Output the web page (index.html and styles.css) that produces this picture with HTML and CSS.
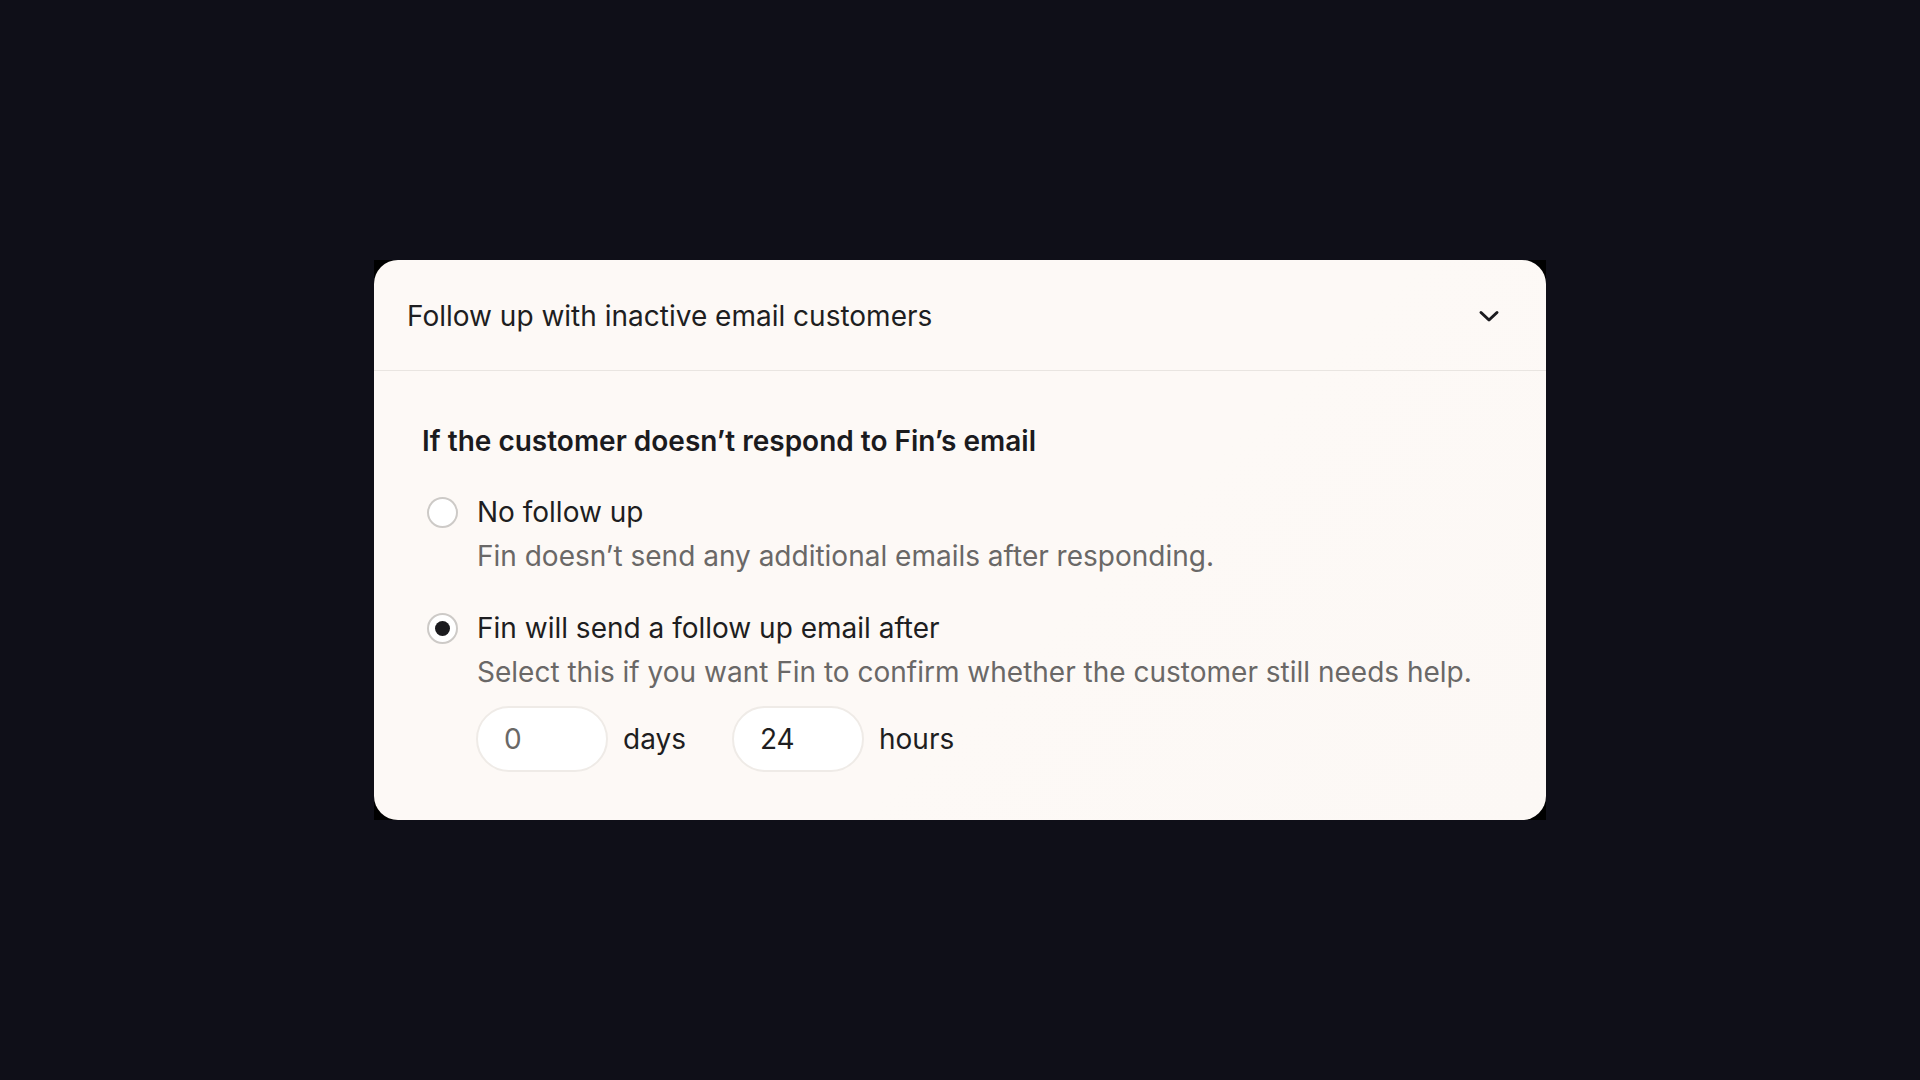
FILE: index.html
```html
<!DOCTYPE html>
<html lang="en">
<head>
<meta charset="utf-8">
<title>Follow up settings</title>
<link rel="stylesheet" href="styles.css">
</head>
<body>
<main class="stage">
  <div class="frame">
    <section class="card">
      <header class="card-header">
        <h2 class="card-title">Follow up with inactive email customers</h2>
        <svg class="chevron" width="22" height="14" viewBox="0 0 22 14" aria-hidden="true">
          <path d="M3 3.5 L11 11 L19 3.5" fill="none" stroke="#1b1b1f" stroke-width="3" stroke-linecap="round" stroke-linejoin="round"/>
        </svg>
      </header>
      <div class="card-body">
        <h3 class="section-title">If the customer doesn’t respond to Fin’s email</h3>
        <div class="option">
          <span class="radio"></span>
          <div class="option-text">
            <div class="option-label">No follow up</div>
            <div class="option-desc">Fin doesn’t send any additional emails after responding.</div>
          </div>
        </div>
        <div class="option">
          <span class="radio radio-checked"></span>
          <div class="option-text">
            <div class="option-label">Fin will send a follow up email after</div>
            <div class="option-desc">Select this if you want Fin to confirm whether the customer still needs help.</div>
            <div class="duration">
              <span class="pill pill-muted">0</span>
              <span class="unit unit-days">days</span>
              <span class="pill">24</span>
              <span class="unit">hours</span>
            </div>
          </div>
        </div>
      </div>
    </section>
  </div>
</main>
</body>
</html>
```
FILE: styles.css
```css
* { box-sizing: border-box; }
html, body { margin: 0; padding: 0; }
body {
  background: #0f0f18;
  font-family: Inter, "Noto Sans", sans-serif;
  color: #1e1e21;
}
.stage {
  width: 1920px;
  height: 1080px;
  display: flex;
  align-items: center;
  justify-content: center;
}
.frame {
  background: #000;
  width: 1172px;
}
.card {
  background: linear-gradient(135deg, #fdf9f6 0%, #fdf9f6 60%, #fcf8f5 100%);
  border-radius: 24px;
  overflow: hidden;
}
.card-header {
  height: 111px;
  border-bottom: 1px solid #e9e5e1;
  display: flex;
  align-items: center;
  justify-content: space-between;
  padding: 2px 46px 0 33px;
}
.card-title {
  margin: 0;
  font-size: 28px;
  font-weight: 400;
  color: #1e1e21;
}
.chevron { display: block; }
.card-body {
  padding: 50px 48px 48px 48px;
}
.section-title {
  margin: 0 0 31px 0;
  font-size: 28px;
  line-height: 40px;
  font-weight: 600;
  color: #1b1b1e;
}
.option {
  display: flex;
  align-items: flex-start;
  gap: 19px;
}
.option + .option { margin-top: 32px; }
.radio {
  flex: none;
  width: 31px;
  height: 31px;
  margin: 5px 0 0 5px;
  border-radius: 50%;
  border: 2px solid #cdcac7;
  background: #fff;
  display: flex;
  align-items: center;
  justify-content: center;
}
.radio-checked::after {
  content: "";
  width: 15px;
  height: 15px;
  border-radius: 50%;
  background: #1b1b1e;
}
.option-label {
  font-size: 28px;
  line-height: 40px;
  color: #1e1e21;
}
.option-desc {
  margin-top: 4px;
  font-size: 28px;
  line-height: 40px;
  color: #6a6867;
}
.duration {
  margin-top: 14px;
  margin-left: -1px;
  display: flex;
  align-items: center;
}
.pill {
  width: 132px;
  height: 66px;
  border-radius: 33px;
  border: 2px solid #efebe7;
  background: #fff;
  display: flex;
  align-items: center;
  padding-left: 26px;
  font-size: 28px;
  color: #1e1e21;
}
.pill-muted { color: #6a6867; }
.unit {
  margin-left: 15px;
  font-size: 28px;
  color: #1e1e21;
}
.unit-days { margin-right: 46px; }
```
